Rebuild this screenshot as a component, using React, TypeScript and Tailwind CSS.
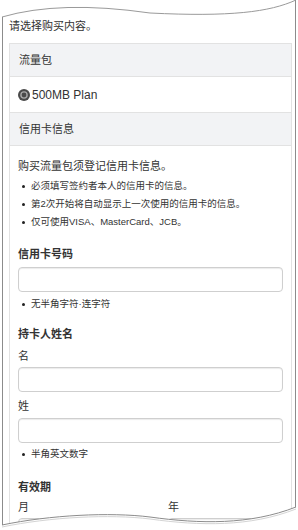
import React from "react";

const notes = [
	"必须填写签约者本人的信用卡的信息。",
	"第2次开始将自动显示上一次使用的信用卡的信息。",
	"仅可使用VISA、MasterCard、JCB。",
];

function Bullet({ children, className = "" }: { children: React.ReactNode; className?: string }) {
	return (
		<li className={`flex items-center h-[18px] text-[9.5px] text-[#333] ${className}`}>
			<span className="w-[3px] h-[3px] rounded-full bg-[#222] ml-[4px] mr-[6px] shrink-0" />
			<span>{children}</span>
		</li>
	);
}

function TextInput({ className = "" }: { className?: string }) {
	return (
		<input
			type="text"
			className={`block h-[25px] border border-[#cfcfcf] rounded-[4px] bg-white shadow-[inset_0_1px_1px_rgba(0,0,0,0.08)] outline-none ${className}`}
		/>
	);
}

function PaperEdge() {
	// torn paper outline drawn over the page
	return (
		<svg
			className="absolute inset-0 pointer-events-none"
			width={298}
			height={530}
			viewBox="0 0 298 530"
		>
			<path
				d="M0,0 L298,0 L296,0 C270,12 230,17 150,13 Q60,0 2,17 L0,17 Z"
				fill="#fff"
			/>
			<path
				d="M296,507 C250,525 200,524 150,517 C110,512 50,515 2,525 L0,525 L0,530 L298,530 L298,507 Z"
				fill="#fff"
			/>
			<path d="M2,17 Q60,0 150,13 C230,17 270,12 296,0" fill="none" stroke="#9a9a9a" strokeWidth={1} />
			<path d="M296,509 C250,527 200,526 150,519 C110,514 50,517 2,527" fill="none" stroke="#d4d4d4" strokeWidth={1} />
			<path d="M296,507 C250,525 200,524 150,517 C110,512 50,515 2,525" fill="none" stroke="#8c8c8c" strokeWidth={1} />
			<line x1={2.5} y1={17} x2={2.5} y2={525} stroke="#8c8c8c" strokeWidth={1} />
			<line x1={295.5} y1={0} x2={295.5} y2={507} stroke="#8c8c8c" strokeWidth={1} />
		</svg>
	);
}

export default function App() {
	return (
		<div className="relative w-[298px] h-[530px] overflow-hidden bg-white text-[#333] font-['Liberation_Sans','Noto_Sans_CJK_SC',sans-serif]">
			<div className="pl-[9px] pr-[6px] pt-[18px]">
				<p className="text-[11px] leading-[16px]">请选择购买内容。</p>

				<div className="mt-[9px] border border-[#e2e2e2]">
					<div className="h-[33px] bg-[#f2f3f5] flex items-center pl-[9px] text-[11px] border-b border-[#e2e2e2]">
						流量包
					</div>
					<div className="h-[36px] flex items-center pl-[8px] border-b border-[#e2e2e2]">
						<svg width={12} height={12} viewBox="0 0 12 12" className="mr-[2px]">
							<circle cx={6} cy={6} r={6} fill="#4a4a4a" />
							<circle cx={6} cy={6} r={3.8} fill="#a8a8a8" />
							<circle cx={6} cy={6} r={2.4} fill="#4a4a4a" />
						</svg>
						<span className="text-[12px]">500MB Plan</span>
					</div>
					<div className="h-[33px] bg-[#f2f3f5] flex items-center pl-[9px] text-[11px] border-b border-[#e2e2e2]">
						信用卡信息
					</div>

					<div className="pl-[8px] pr-[8px] pt-[12px] pb-[40px]">
						<p className="text-[11px] leading-[16px]">购买流量包须登记信用卡信息。</p>
						<ul className="mt-[3px]">
							{notes.map((n) => (
								<Bullet key={n}>{n}</Bullet>
							))}
						</ul>

						<h3 className="mt-[15px] text-[11px] leading-[16px] font-bold">信用卡号码</h3>
						<TextInput className="mt-[5px] w-full" />
						<ul className="mt-[3px]">
							<Bullet>无半角字符·连字符</Bullet>
						</ul>

						<h3 className="mt-[13px] text-[11px] leading-[16px] font-bold">持卡人姓名</h3>
						<p className="mt-[6px] text-[11px] leading-[16px]">名</p>
						<TextInput className="mt-[3px] w-full" />
						<p className="mt-[6px] text-[11px] leading-[16px]">姓</p>
						<TextInput className="mt-[4px] w-full" />
						<ul className="mt-[2px]">
							<Bullet>半角英文数字</Bullet>
						</ul>

						<h3 className="mt-[16px] text-[11px] leading-[16px] font-bold">有效期</h3>
						<div className="mt-[4px] flex">
							<div className="w-[150px]">
								<p className="text-[11px] leading-[16px]">月</p>
								<TextInput className="mt-[3px] w-[115px]" />
							</div>
							<div className="flex-1">
								<p className="text-[11px] leading-[16px]">年</p>
								<TextInput className="mt-[3px] w-full" />
							</div>
						</div>
					</div>
				</div>
			</div>
			<PaperEdge />
		</div>
	);
}
